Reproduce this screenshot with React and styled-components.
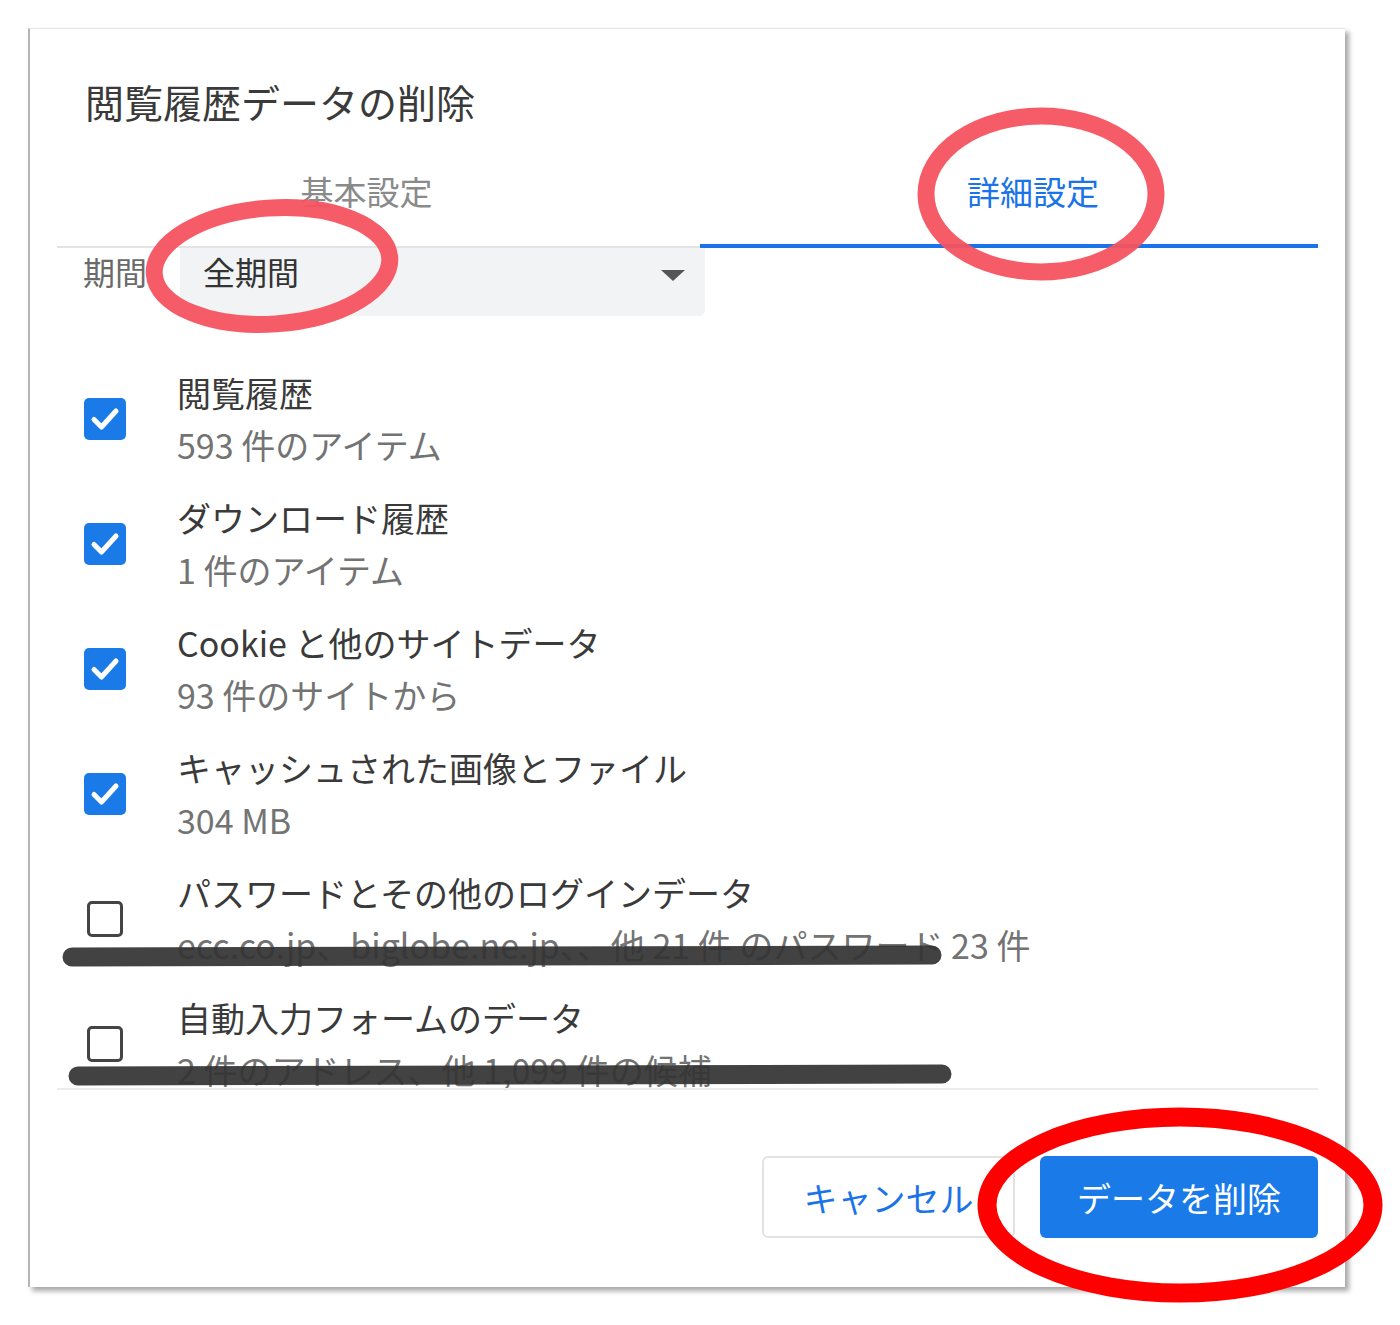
import React from 'react'
import styled, { createGlobalStyle } from 'styled-components'

const GlobalStyle = createGlobalStyle`
  html, body { margin: 0; padding: 0; background: #fff; }
  body { font-family: "Noto Sans CJK JP", "Noto Sans", sans-serif; }
`

const items = [
  { title: '閲覧履歴', sub: '593 件のアイテム', checked: true },
  { title: 'ダウンロード履歴', sub: '1 件のアイテム', checked: true },
  { title: 'Cookie と他のサイトデータ', sub: '93 件のサイトから', checked: true },
  { title: 'キャッシュされた画像とファイル', sub: '304 MB', checked: true },
  { title: 'パスワードとその他のログインデータ', sub: 'ecc.co.jp、biglobe.ne.jp、、他 21 件 のパスワード 23 件', checked: false },
  { title: '自動入力フォームのデータ', sub: '2 件のアドレス、他 1,099 件の候補', checked: false },
]

function CheckBox({ checked }) {
  return (
    <Box $checked={checked}>
      {checked && (
        <svg width="32" height="32" viewBox="0 0 32 32">
          <path d="M5 16.5 L12.5 24 L27 8" fill="none" stroke="#fff" strokeWidth="5" strokeLinecap="round" strokeLinejoin="round" />
        </svg>
      )}
    </Box>
  )
}

function App() {
  return (
    <Page>
      <GlobalStyle />
      <Dialog>
        <Title>閲覧履歴データの削除</Title>
        <Tabs>
          <Tab $width="643px" $shift="-24px">基本設定</Tab>
          <Tab $active $shift="48px">詳細設定</Tab>
        </Tabs>
        <PeriodRow>
          <PeriodLabel>期間</PeriodLabel>
          <Select>
            <span>全期間</span>
            <Caret />
          </Select>
        </PeriodRow>
        <List>
          {items.map(item => (
            <Row key={item.title}>
              <CheckBox checked={item.checked} />
              <Texts>
                <ItemTitle>{item.title}</ItemTitle>
                <ItemSub>{item.sub}</ItemSub>
              </Texts>
            </Row>
          ))}
        </List>
        <Footer>
          <Button>キャンセル</Button>
          <Button $primary>データを削除</Button>
        </Footer>
      </Dialog>

      {/* hand drawn marks over the screenshot */}
      <Marks width="1400" height="1325" viewBox="0 0 1400 1325">
        <line x1="72" y1="957" x2="932" y2="955" stroke="#333" strokeWidth="19" strokeLinecap="round" opacity="0.92" />
        <line x1="78" y1="1076" x2="942" y2="1074" stroke="#333" strokeWidth="19" strokeLinecap="round" opacity="0.92" />
        <ellipse cx="272" cy="266" rx="118" ry="58" fill="none" stroke="#f6535f" strokeWidth="17" transform="rotate(-4 272 266)" opacity="0.95" />
        <ellipse cx="1041" cy="194" rx="115" ry="78" fill="none" stroke="#f6535f" strokeWidth="17" opacity="0.95" />
        <ellipse cx="1180" cy="1205" rx="193" ry="88" fill="none" stroke="#ff0000" strokeWidth="19" />
      </Marks>
    </Page>
  )
}

const Page = styled.div`
  position: relative;
  width: 1400px;
  height: 1325px;
  padding: 28px 0 0 28px;
  box-sizing: border-box;
  overflow: hidden;
`

const Dialog = styled.div`
  width: 1317px;
  height: 1259px;
  box-sizing: border-box;
  background: #fff;
  border-left: 2px solid #b5b5b5;
  border-top: 1px solid #e6e6e6;
  box-shadow: 4px 4px 5px rgba(0, 0, 0, 0.35);
  padding: 46px 27px 0 27px;
  display: flex;
  flex-direction: column;
`

const Title = styled.h1`
  margin: 0 0 0 28px;
  font-size: 39px;
  font-weight: 400;
  line-height: 52px;
  color: #3a3a3a;
`

const Tabs = styled.div`
  margin-top: 14px;
  display: flex;
  border-bottom: 2px solid #e3e3e3;
`

const Tab = styled.div`
  flex: ${p => (p.$width ? `0 0 ${p.$width}` : '1')};
  height: 107px;
  box-sizing: border-box;
  display: flex;
  align-items: center;
  justify-content: center;
  padding-bottom: 4px;
  font-size: 33px;
  color: ${p => (p.$active ? '#1a73e8' : '#8a8a8a')};
  border-bottom: 4px solid ${p => (p.$active ? '#1a73e8' : 'transparent')};
  margin-bottom: -2px;
  text-indent: ${p => p.$shift};
`

const PeriodRow = styled.div`
  display: flex;
  align-items: stretch;
  padding-left: 26px;
`

const PeriodLabel = styled.div`
  width: 97px;
  font-size: 32px;
  color: #6a6a6a;
  display: flex;
  align-items: center;
  padding-bottom: 24px;
`

const Select = styled.div`
  width: 525px;
  height: 68px;
  box-sizing: border-box;
  background: #f2f3f5;
  border-radius: 0 0 6px 6px;
  display: flex;
  align-items: center;
  justify-content: space-between;
  padding: 0 20px 22px 23px;
  font-size: 32px;
  color: #333;
  line-height: 1;
`

const Caret = styled.span`
  width: 0;
  height: 0;
  border-left: 12px solid transparent;
  border-right: 12px solid transparent;
  border-top: 11px solid #555;
  margin-top: 8px;
`

const List = styled.div`
  margin-top: 49px;
  display: flex;
  flex-direction: column;
  gap: 21px;
`

const Row = styled.div`
  display: flex;
  align-items: center;
  height: 104px;
  padding-left: 27px;
`

const Box = styled.div`
  width: ${p => (p.$checked ? '42px' : '36px')};
  height: ${p => (p.$checked ? '42px' : '36px')};
  border-radius: 5px;
  box-sizing: border-box;
  background: ${p => (p.$checked ? '#1a7be8' : '#fff')};
  border: ${p => (p.$checked ? 'none' : '3px solid #444')};
  margin: ${p => (p.$checked ? '0 51px 0 0' : '0 54px 0 3px')};
  display: flex;
  align-items: center;
  justify-content: center;
  flex-shrink: 0;
`

const Texts = styled.div`
  display: flex;
  flex-direction: column;
`

const ItemTitle = styled.div`
  font-size: 34px;
  line-height: 52px;
  color: #3a3a3a;
  white-space: nowrap;
`

const ItemSub = styled.div`
  font-size: 34px;
  line-height: 52px;
  color: #737373;
  white-space: nowrap;
`

const Footer = styled.div`
  margin-top: -8px;
  border-top: 2px solid #ececec;
  padding-top: 66px;
  display: flex;
  justify-content: flex-end;
  gap: 25px;
`

const Button = styled.div`
  height: 82px;
  width: ${p => (p.$primary ? '278px' : '253px')};
  box-sizing: border-box;
  border-radius: 6px;
  display: flex;
  align-items: center;
  justify-content: center;
  font-size: 34px;
  background: ${p => (p.$primary ? '#1a7be8' : '#fff')};
  color: ${p => (p.$primary ? '#fff' : '#1a73e8')};
  border: ${p => (p.$primary ? 'none' : '2px solid #e2e2e2')};
`

const Marks = styled.svg`
  position: absolute;
  left: 0;
  top: 0;
  pointer-events: none;
`

export default App
